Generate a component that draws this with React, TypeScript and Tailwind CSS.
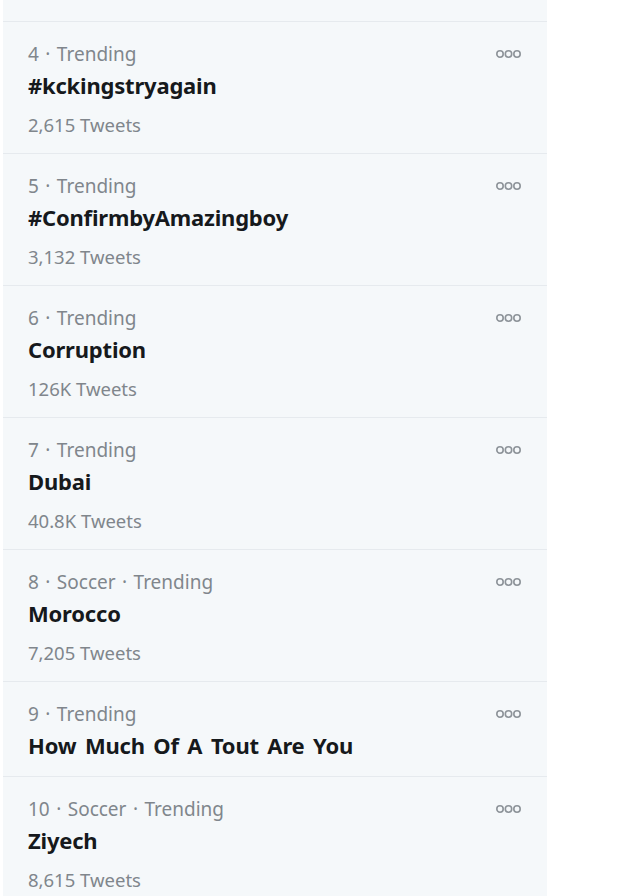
import React from "react";

type Trend = { meta: string; title: string; count?: string };

const trends: Trend[] = [
  { meta: "4 · Trending", title: "#kckingstryagain", count: "2,615 Tweets" },
  { meta: "5 · Trending", title: "#ConfirmbyAmazingboy", count: "3,132 Tweets" },
  { meta: "6 · Trending", title: "Corruption", count: "126K Tweets" },
  { meta: "7 · Trending", title: "Dubai", count: "40.8K Tweets" },
  { meta: "8 · Soccer · Trending", title: "Morocco", count: "7,205 Tweets" },
  { meta: "9 · Trending", title: "How Much Of A Tout Are You" },
  { meta: "10 · Soccer · Trending", title: "Ziyech", count: "8,615 Tweets" },
];

function Dots() {
  return (
    <svg width="28" height="12" viewBox="0 0 28 12" className="text-[#8d9399]">
      <circle cx="5" cy="6" r="3.2" fill="none" stroke="currentColor" strokeWidth="1.6" />
      <circle cx="13.5" cy="6" r="3.2" fill="none" stroke="currentColor" strokeWidth="1.6" />
      <circle cx="22" cy="6" r="3.2" fill="none" stroke="currentColor" strokeWidth="1.6" />
    </svg>
  );
}

function Row({ t, last }: { t: Trend; last: boolean }) {
  return (
    <div
      className={`flex pl-[25px] pr-[24px] pt-[20px] ${t.count ? "h-[132px]" : "h-[95px]"} ${
        last ? "" : "border-b border-[#e6eaee]"
      }`}
    >
      <div className="flex-1 flex flex-col">
        <div className="text-[19px] leading-[24px] text-[#80868c] [word-spacing:1.5px]">{t.meta}</div>
        <div className="mt-[5px] text-[22px] leading-[28px] font-bold tracking-[-0.2px] [word-spacing:3px] text-[#16191c]">
          {t.title}
        </div>
        {t.count && (
          <div className="mt-[14px] text-[18.5px] leading-[24px] text-[#80868c]">{t.count}</div>
        )}
      </div>
      <div className="pt-[6px]">
        <Dots />
      </div>
    </div>
  );
}

export default function App() {
  return (
    <div
      className="w-[640px] h-[896px] bg-white overflow-hidden"
      style={{ fontFamily: '"Noto Sans", "Open Sans", Arial, sans-serif' }}
    >
      <div className="ml-[3px] w-[544px] h-full bg-[#f5f8fa]">
        <div className="h-[22px] border-b border-[#e6eaee]" />
        {trends.map((t, i) => (
          <Row key={i} t={t} last={i === trends.length - 1} />
        ))}
      </div>
    </div>
  );
}
